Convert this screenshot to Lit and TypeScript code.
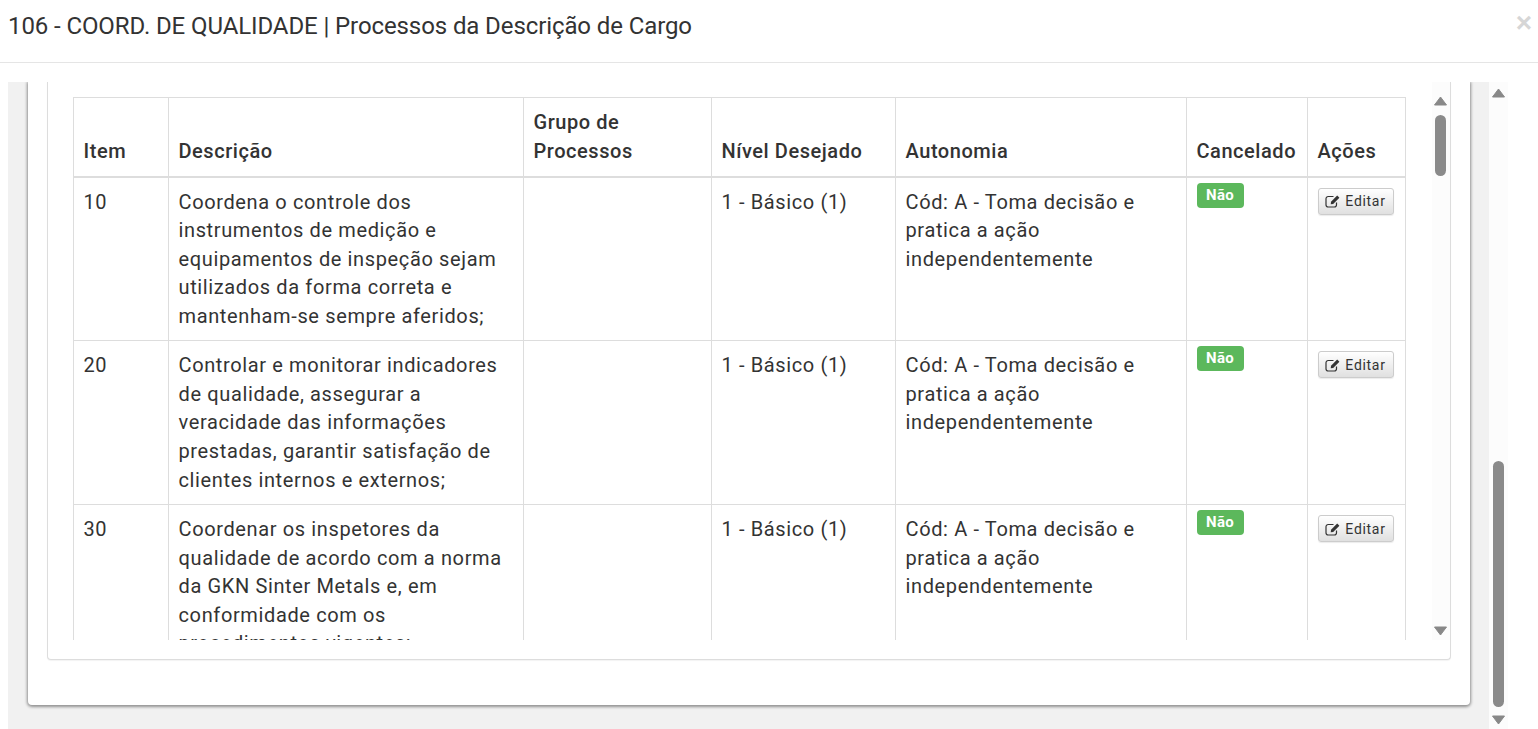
import { LitElement, html, css } from "lit";
import { customElement } from "lit/decorators.js";

const autonomia = "Cód: A - Toma decisão e pratica a ação independentemente";

const rows = [
  {
    item: "10",
    descricao:
      "Coordena o controle dos instrumentos de medição e equipamentos de inspeção sejam utilizados da forma correta e mantenham-se sempre aferidos;",
  },
  {
    item: "20",
    descricao:
      "Controlar e monitorar indicadores de qualidade, assegurar a veracidade das informações prestadas, garantir satisfação de clientes internos e externos;",
  },
  {
    item: "30",
    descricao:
      "Coordenar os inspetores da qualidade de acordo com a norma da GKN Sinter Metals e, em conformidade com os procedimentos vigentes;",
  },
];

const arrowUp = html`<svg class="arrow" width="13" height="10" viewBox="0 0 13 10"><path d="M6.5 1 L12.5 9 H0.5 Z" fill="#888" stroke="#888" stroke-linejoin="round"/></svg>`;
const arrowDown = html`<svg class="arrow" width="13" height="10" viewBox="0 0 13 10"><path d="M0.5 1 H12.5 L6.5 9 Z" fill="#888" stroke="#888" stroke-linejoin="round"/></svg>`;

const editIcon = html`<svg class="edit-icon" width="16" height="14" viewBox="0 0 16 14">
  <path d="M11.5 8.5 V10.8 a2.2 2.2 0 0 1 -2.2 2.2 H3.2 a2.2 2.2 0 0 1 -2.2 -2.2 V4.7 a2.2 2.2 0 0 1 2.2 -2.2 H8.5" fill="none" stroke="#333" stroke-width="1.2"/>
  <path d="M6 7.8 L12.2 1.6 L14.4 3.8 L8.2 10 L5.7 10.3 Z" fill="#333"/>
</svg>`;

@customElement("app-root")
export class AppRoot extends LitElement {
  static styles = css`
    :host {
      display: block;
      width: 1538px;
      height: 729px;
      overflow: hidden;
      background: #fff;
      font-family: Roboto, "Liberation Sans", sans-serif;
      color: #333;
    }
    .header {
      height: 62px;
      padding-left: 8px;
      display: flex;
      align-items: center;
      justify-content: space-between;
      border-bottom: 1px solid #e5e5e5;
      box-sizing: content-box;
    }
    .title {
      font-size: 24px;
      font-weight: 400;
      letter-spacing: -0.1px;
      margin: 0;
      position: relative;
      top: -5px;
    }
    .close {
      font-family: "Liberation Sans", sans-serif;
      font-size: 28px;
      font-weight: 700;
      color: #d6d6d6;
      margin-right: 6px;
      position: relative;
      top: -8px;
    }
    .modal-body {
      display: flex;
      height: 647px;
      margin-top: 19px;
      padding-left: 8px;
    }
    .backdrop {
      width: 1481px;
      height: 100%;
      box-sizing: border-box;
      background: #f1f1f1;
      padding: 0 19px 24px 19.5px;
      overflow: hidden;
    }
    .card {
      height: 623px;
      box-sizing: border-box;
      background: #fff;
      border-radius: 0 0 4px 4px;
      box-shadow: 0 1px 3px 1px rgba(0, 0, 0, 0.4);
      padding: 0 19px 45px 19px;
    }
    .panel {
      display: flex;
      height: 578px;
      box-sizing: border-box;
      background: #fff;
      border: 1px solid #ddd;
      border-top: none;
      border-radius: 0 0 4px 4px;
      padding: 0 0 19px 25px;
      box-shadow: 0 1px 1px rgba(0, 0, 0, 0.05);
    }
    .scroll-content {
      width: 1334px;
      height: 558px;
      overflow: hidden;
      padding-top: 15.4px;
      box-sizing: border-box;
      margin-right: 25px;
      flex: none;
    }
    table {
      width: 1332px;
      table-layout: fixed;
      border-collapse: collapse;
      font-size: 20px;
      line-height: 28.57px;
    }
    th,
    td {
      border: 1px solid #ddd;
      padding: 10px;
      text-align: left;
    }
    th {
      font-weight: 500;
      vertical-align: bottom;
      border-bottom-width: 2px;
      font-size: 20px;
      letter-spacing: 0.55px;
    }
    td {
      vertical-align: top;
      letter-spacing: 0.63px;
    }
    .c-item { width: 95px; }
    .c-desc { width: 355px; }
    .c-grupo { width: 188px; }
    .c-nivel { width: 184px; }
    .c-auto { width: 291px; }
    .c-canc { width: 121px; }
    .c-acoes { width: 98px; }
    .badge {
      display: block;
      width: 47px;
      height: 25px;
      margin-top: -5px;
      border-radius: 4px;
      background: #5cb85c;
      color: #fff;
      font-size: 15px;
      font-weight: 700;
      letter-spacing: 0.3px;
      line-height: 24px;
      text-align: center;
    }
    .btn {
      display: flex;
      align-items: center;
      justify-content: center;
      gap: 4px;
      width: 76px;
      height: 27px;
      box-sizing: border-box;
      border: 1px solid #ccc;
      border-radius: 3px;
      background: linear-gradient(#fff, #e0e0e0);
      box-shadow: 0 1px 1px rgba(0, 0, 0, 0.08);
      color: #333;
      font-family: inherit;
      font-size: 14px;
      letter-spacing: 0.7px;
      padding: 0;
    }
    .scrollbar {
      display: flex;
      flex-direction: column;
      align-items: center;
      width: 18px;
      height: 558px;
      background: #fcfcfc;
      flex: none;
      box-sizing: border-box;
    }
    .arrow {
      flex: none;
    }
    .thumb {
      width: 11px;
      flex: none;
      background: #8a8a8a;
      border-radius: 6px;
    }
    .inner .arrow:first-child { margin-top: 14px; }
    .inner .thumb { height: 61px; margin-top: 9px; }
    .inner .arrow:last-child { margin-top: 450px; }
    .outer {
      width: 19px;
      height: 647px;
    }
    .outer .arrow:first-child { margin-top: 6px; }
    .outer .thumb { height: 246px; margin-top: 363px; }
    .outer .arrow:last-child { margin-top: 8px; }
  `;

  render() {
    return html`
      <div class="header">
        <h4 class="title">106 - COORD. DE QUALIDADE | Processos da Descrição de Cargo</h4>
        <span class="close">×</span>
      </div>
      <div class="modal-body">
        <div class="backdrop">
          <div class="card">
            <div class="panel">
              <div class="scroll-content">
                <table>
                  <colgroup>
                    <col class="c-item" />
                    <col class="c-desc" />
                    <col class="c-grupo" />
                    <col class="c-nivel" />
                    <col class="c-auto" />
                    <col class="c-canc" />
                    <col class="c-acoes" />
                  </colgroup>
                  <thead>
                    <tr>
                      <th>Item</th>
                      <th>Descrição</th>
                      <th>Grupo de Processos</th>
                      <th>Nível Desejado</th>
                      <th>Autonomia</th>
                      <th>Cancelado</th>
                      <th>Ações</th>
                    </tr>
                  </thead>
                  <tbody>
                    ${rows.map(
                      (r) => html`
                        <tr>
                          <td>${r.item}</td>
                          <td>${r.descricao}</td>
                          <td></td>
                          <td>1 - Básico (1)</td>
                          <td>${autonomia}</td>
                          <td><span class="badge">Não</span></td>
                          <td><button class="btn">${editIcon}Editar</button></td>
                        </tr>
                      `
                    )}
                  </tbody>
                </table>
              </div>
              <div class="scrollbar inner">
                ${arrowUp}
                <div class="thumb"></div>
                ${arrowDown}
              </div>
            </div>
          </div>
        </div>
        <div class="scrollbar outer">
          ${arrowUp}
          <div class="thumb"></div>
          ${arrowDown}
        </div>
      </div>
    `;
  }
}
